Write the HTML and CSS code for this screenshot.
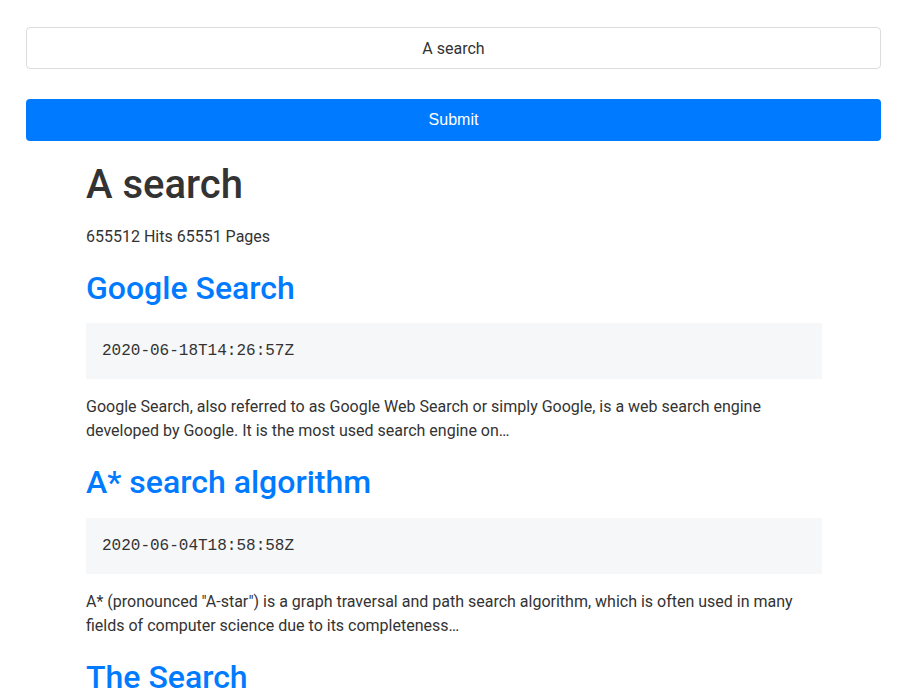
FILE: index.html
```html
<!DOCTYPE html>
<html lang="en">
<head>
<meta charset="utf-8">
<title>A search</title>
<link rel="stylesheet" href="styles.css">
</head>
<body>
<form class="search-form">
  <input class="search-input" type="text" value="A search">
  <button class="search-button" type="button">Submit</button>
</form>
<main class="results">
  <h1 class="results-title">A search</h1>
  <p class="results-meta">655512 Hits 65551 Pages</p>
  <section class="result">
    <h2 class="result-title"><a href="#">Google Search</a></h2>
    <pre class="result-date">2020-06-18T14:26:57Z</pre>
    <p class="result-desc">Google Search, also referred to as Google Web Search or simply Google, is a web search engine developed by Google. It is the most used search engine on…</p>
  </section>
  <section class="result">
    <h2 class="result-title"><a href="#">A* search algorithm</a></h2>
    <pre class="result-date">2020-06-04T18:58:58Z</pre>
    <p class="result-desc">A* (pronounced "A-star") is a graph traversal and path search algorithm, which is often used in many fields of computer science due to its completeness…</p>
  </section>
  <section class="result">
    <h2 class="result-title"><a href="#">The Search</a></h2>
  </section>
</main>
</body>
</html>
```

FILE: styles.css
```css
html, body {
  margin: 0;
  padding: 0;
  background: #fff;
}
body {
  font-family: Roboto, "Liberation Sans", Arial, sans-serif;
  font-size: 16px;
  line-height: 24px;
  color: #333;
}
.search-form {
  display: flex;
  flex-direction: column;
  gap: 30px;
  padding: 27px 23px 0 26px;
  margin: 0;
}
.search-input {
  box-sizing: border-box;
  height: 42px;
  width: 100%;
  border: 1px solid #dcdcdc;
  border-radius: 4px;
  text-align: center;
  font-family: Roboto, "Liberation Sans", sans-serif;
  font-size: 16px;
  color: #333;
  padding: 0 12px;
  background: #fff;
  outline: none;
}
.search-button {
  box-sizing: border-box;
  height: 42px;
  width: 100%;
  border: none;
  border-radius: 4px;
  background: #007bff;
  color: #fff;
  font-family: "Liberation Sans", Arial, sans-serif;
  font-size: 16px;
  cursor: pointer;
}
.results {
  margin: 0 82px 0 86px;
  padding-top: 20px;
}
.results-title {
  font-size: 40px;
  line-height: 48px;
  font-weight: 500;
  margin: 0 0 16px;
  color: #333;
}
.results-meta {
  margin: 0 0 20px;
}
.result-title {
  font-size: 32px;
  line-height: 38.4px;
  font-weight: 500;
  margin: 0 0 16px;
}
.result-title a {
  color: #007bff;
  text-decoration: none;
}
.result-date {
  margin: 0 0 16px;
  padding: 16px;
  background: #f6f7f9;
  font-family: "Liberation Mono", "Courier New", monospace;
  font-size: 16px;
  line-height: 24px;
  color: #333;
}
.result-desc {
  margin: 0 0 20px;
}
```
